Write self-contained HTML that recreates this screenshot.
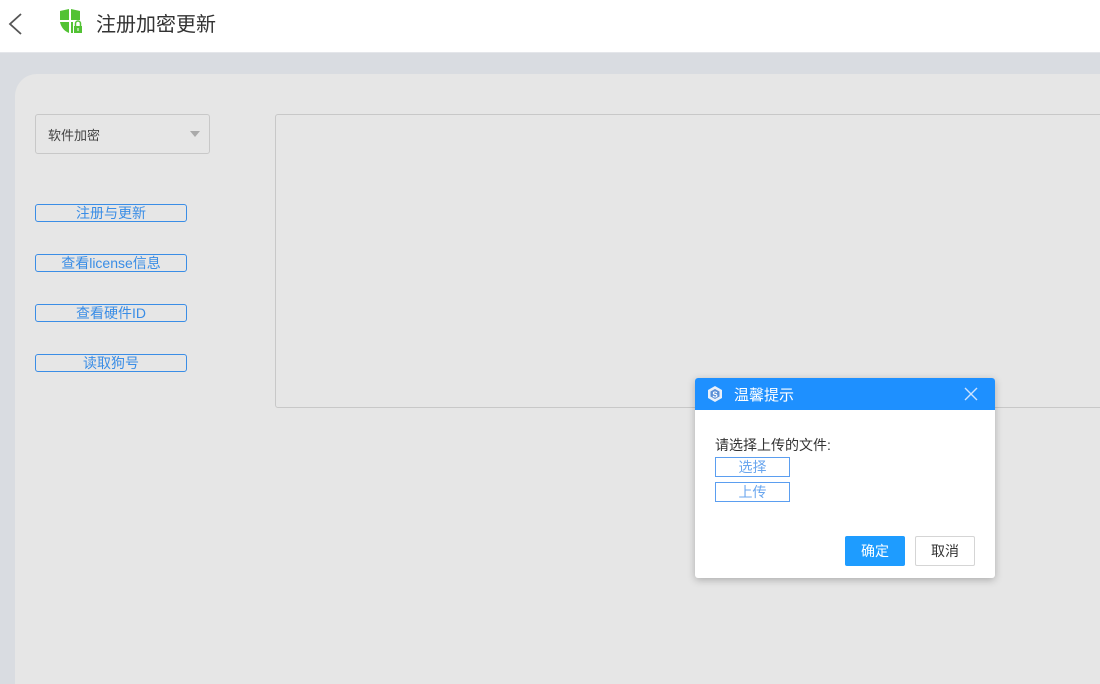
<!DOCTYPE html>
<html style="overflow:hidden"><head><meta charset="utf-8"><style>
*{margin:0;padding:0;box-sizing:border-box}
html,body{width:1100px;height:684px;overflow:hidden}
body{background:#d9dce1;font-family:"Liberation Sans","Noto Sans CJK SC",sans-serif;position:relative}
.hdr{position:absolute;left:0;top:0;width:1100px;height:53px;background:#fff;border-bottom:1px solid #e4e6ea}
.hdr .t{position:absolute;left:96px;top:8px;font-size:20px;color:#333}
.card{position:absolute;left:15px;top:74px;width:1085px;height:610px;background:#e6e6e6;border-radius:22px 0 0 0}
.sel{position:absolute;left:35px;top:114px;width:175px;height:40px;border:1px solid #c8c8c8;border-radius:3px;font-size:13px;color:#444;padding:10px 0 0 12px}
.sel:after{content:"";position:absolute;right:9px;top:16px;border:5px solid transparent;border-top:6px solid #aaa}
.btn{position:absolute;left:35px;width:152px;height:18px;border:1px solid #3a8de6;border-radius:3px;color:#3a8de6;font-size:14px;text-align:center;line-height:16px}
.box{position:absolute;left:275px;top:114px;width:830px;height:294px;border:1px solid #c8c8c8;border-radius:3px}
.dlg{position:absolute;left:695px;top:378px;width:300px;height:200px;background:#fff;border-radius:3px;box-shadow:0 2px 8px rgba(0,0,0,.25);overflow:hidden}
.dh{height:32px;background:#1e90ff;color:#fff;font-size:15px;padding:6px 0 0 39px;position:relative}
.fb{position:absolute;left:20px;width:75px;height:20px;border:1px solid #5b9ef0;color:#6aa6ee;font-size:14px;text-align:center;line-height:18px}
.ok{position:absolute;left:150px;top:158px;width:60px;height:30px;background:#1e9cff;color:#fff;font-size:14px;text-align:center;line-height:30px;border-radius:2px}
.cc{position:absolute;left:220px;top:158px;width:60px;height:30px;border:1px solid #d5d5d5;color:#333;font-size:14px;text-align:center;line-height:28px;border-radius:2px}
</style></head><body>
<div class="hdr">
<svg style="position:absolute;left:6px;top:12px" width="20" height="24" viewBox="0 0 20 24"><path d="M15 2 L4 12 L15 22" fill="none" stroke="#555" stroke-width="1.8"/></svg>
<svg style="position:absolute;left:58px;top:8px" width="26" height="26" viewBox="0 0 26 26"><path d="M2 3 L11 1 L11 12 L2 12 Z M13 1 L22 3 L22 12 L13 12 Z M2 14 L11 14 L11 25 C6 23 3 19 2 14 Z M13 14 L15 14 L15 25 L13 25 Z" fill="#52c234"/><rect x="16" y="18" width="8" height="7" fill="#52c234"/><path d="M17.5 18 V15.5 a2.5 2.5 0 0 1 5 0 V18" fill="none" stroke="#52c234" stroke-width="1.5"/><rect x="19.5" y="20" width="1" height="3" fill="#fff"/></svg>
<div class="t">注册加密更新</div>
</div>
<div class="card"></div>
<div class="sel">软件加密</div>
<div class="btn" style="top:204px">注册与更新</div>
<div class="btn" style="top:254px">查看license信息</div>
<div class="btn" style="top:304px">查看硬件ID</div>
<div class="btn" style="top:354px">读取狗号</div>
<div class="box"></div>
<div class="dlg">
<div class="dh">
<svg style="position:absolute;left:11px;top:7px" width="18" height="18" viewBox="0 0 18 18"><path d="M9 1 L16 5 L16 13 L9 17 L2 13 L2 5 Z" fill="#e8f0fa"/><path d="M9 4 L13.5 6.5 L13.5 11.5 L9 14 L4.5 11.5 L4.5 6.5 Z" fill="#5b8fd6"/><text x="9" y="12.5" font-size="8" fill="#fff" text-anchor="middle" font-family="Liberation Sans" font-weight="bold">S</text></svg>
温馨提示
<svg style="position:absolute;left:269px;top:9px" width="14" height="14" viewBox="0 0 14 14"><path d="M1 1 L13 13 M13 1 L1 13" stroke="#cfe4ff" stroke-width="1.4"/></svg>
</div>
<div style="position:absolute;left:20px;top:57px;font-size:14px;color:#333">请选择上传的文件:</div>
<div class="fb" style="top:79px">选择</div>
<div class="fb" style="top:104px">上传</div>
<div class="ok">确定</div>
<div class="cc">取消</div>
</div>
</body></html>
